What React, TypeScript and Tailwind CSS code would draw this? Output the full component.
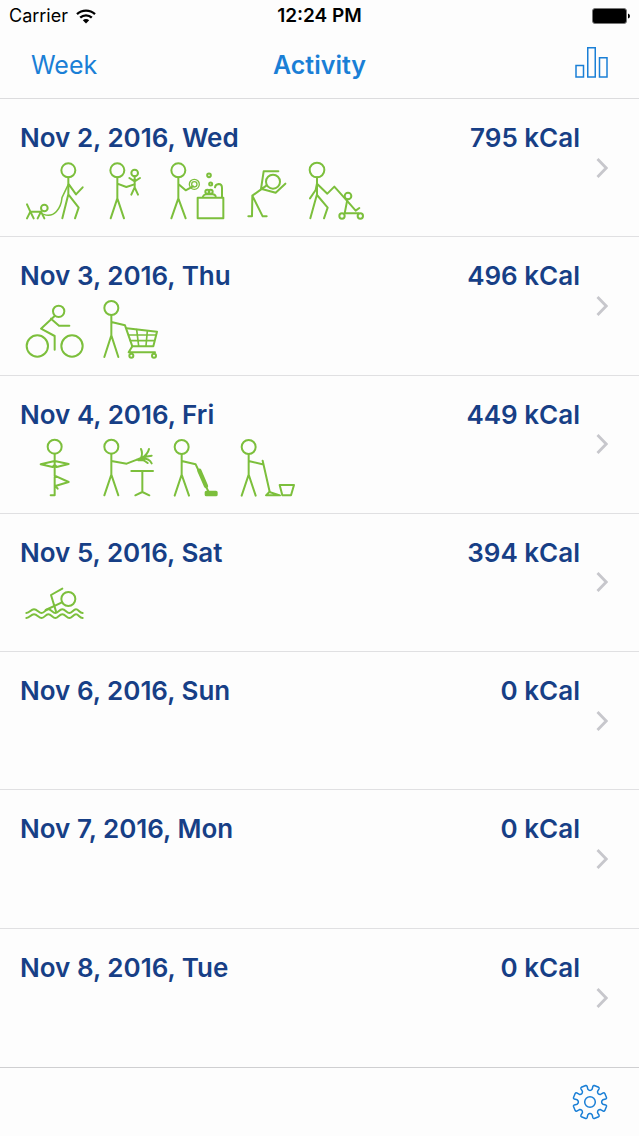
import type { ReactNode } from "react";

function Drawing({
  viewBox,
  width,
  label,
  children,
}: {
  viewBox: string;
  width: number;
  label: string;
  children: ReactNode;
}) {
  return (
    <svg
      viewBox={viewBox}
      width={width}
      height={60}
      role="img"
      aria-label={label}
      className="shrink-0 overflow-visible"
      fill="none"
      stroke="#7cbf3c"
      strokeWidth={6}
      strokeLinecap="round"
      strokeLinejoin="round"
    >
      {children}
    </svg>
  );
}

const WalkingDog = () => (
  <Drawing viewBox="27 18 186 180" width={62} label="Walking the dog">
    <circle cx="160" cy="46" r="21" />
    <path d="M160 67V118L142 190M160 118L191 158L180 190M160 86L183 118L203 97" />
    <path d="M160 88L141 128C138 160 118 190 86 178" strokeWidth={4.5} />
    <circle cx="88" cy="159" r="10" />
    <path d="M36 148L46 170H78M46 170L36 190M46 170L56 190M78 170L68 190M78 170L88 190" />
  </Drawing>
);

const HoldingBaby = () => (
  <Drawing viewBox="273 18 117 180" width={39} label="Child care">
    <circle cx="307" cy="46" r="21" />
    <path d="M307 67V130L287 190M307 130L327 190M307 86L334 96L358 88" />
    <circle cx="359" cy="54" r="10" />
    <path d="M359 64V97L349 119M359 97L369 119M343 69L359 79L375 69" />
  </Drawing>
);

const WashingDishes = () => (
  <Drawing viewBox="60 18 186 180" width={62} label="Washing dishes">
    <circle cx="100" cy="46" r="21" />
    <path d="M100 67V130L79 190M100 130L122 190M100 87L122 106L144 94" />
    <circle cx="148" cy="88" r="15" strokeWidth={4} />
    <circle cx="148" cy="88" r="8" strokeWidth={4} />
    <path d="M158 128H235V190H158ZM231 126V99Q231 87 221 87Q211 88 210 97" />
    <circle cx="192" cy="61" r="5.5" />
    <circle cx="197" cy="87" r="4.5" />
    <circle cx="187" cy="110" r="6" />
    <circle cx="197" cy="110" r="6" />
    <path d="M174 124Q177 118 185 118H203Q211 119 212 124" />
  </Drawing>
);

const Stretching = () => (
  <Drawing viewBox="36 18 120 180" width={40} label="Stretching">
    <circle cx="114" cy="80" r="21" />
    <path d="M130 49H86L78 102M94 92L52 122L51 184H40M52 122L83 184H95M78 101L122 113L151 86" />
  </Drawing>
);

const PushingStroller = () => (
  <Drawing viewBox="216 18 180 180" width={60} label="Pushing a stroller">
    <circle cx="246" cy="45" r="22" />
    <path d="M246 67V118L226 190M246 120L278 158L267 190M246 85L242 105L225 130M246 86L277 116L298 95L343 145L362 167L373 159" />
    <circle cx="339" cy="123" r="10" />
    <path d="M337 134L329 175H370" />
    <circle cx="321" cy="183" r="8" />
    <circle cx="376" cy="183" r="8" />
  </Drawing>
);

const Cycling = () => (
  <Drawing viewBox="27 13 180 180" width={60} label="Cycling">
    <circle cx="131" cy="50" r="17" />
    <path d="M119 64L78 102L119 124V165M108 72L132 93H163" />
    <circle cx="67" cy="154" r="32" />
    <circle cx="171" cy="154" r="32" />
  </Drawing>
);

const Shopping = () => (
  <Drawing viewBox="267 13 168 180" width={56} label="Shopping">
    <circle cx="289" cy="40" r="21" />
    <path d="M289 61V122L268 187M289 122L310 187M289 82L330 92L352 155" />
    <path d="M335 101L426 111L415 155H352L341 173H420" />
    <path d="M341 121H422M346 138H418M365 105L371 154M397 109L393 154" strokeWidth={5} />
    <circle cx="349" cy="183" r="6" />
    <circle cx="417" cy="183" r="6" />
  </Drawing>
);

const Yoga = () => (
  <Drawing viewBox="-3 24 180 180" width={60} label="Yoga">
    <circle cx="89" cy="50" r="21" />
    <path d="M89 71V196H77M89 93L47 103L83 111L89 104L95 111L131 102L89 93M89 137L131 156L91 168L98 176" />
  </Drawing>
);

const Gardening = () => (
  <Drawing viewBox="237 24 147 180" width={49} label="Watering plants">
    <circle cx="259" cy="50" r="21" />
    <path d="M259 71V134L238 196M259 134L280 196M259 93L305 101L336 89" />
    <path d="M319 123H384M352 123V186L331 196M352 186L373 196" />
    <path d="M336 89L348 84Q354 70 348 57M350 84Q368 74 372 57M350 84Q366 78 380 77M348 86Q372 84 380 100M348 88Q360 92 368 99M340 91H358" />
  </Drawing>
);

const Vacuuming = () => (
  <Drawing viewBox="39 24 141 180" width={47} label="Vacuuming">
    <circle cx="65" cy="51" r="21" />
    <path d="M65 72V134L44 197M65 134L87 197M65 93L107 103L115 120M138 170L146 186" />
    <path d="M118 122L138 168" strokeWidth={13} />
    <rect x="137" y="185" width="33" height="11" rx="2" fill="#7cbf3c" />
  </Drawing>
);

const Mopping = () => (
  <Drawing viewBox="240 24 168 180" width={56} label="Mopping">
    <circle cx="266" cy="51" r="21" />
    <path d="M266 72V134L245 197M266 134L287 197M266 93L307 103M308 92L329 185" />
    <path d="M318 196L328 186L360 196ZM359 165H402L393 196H367Z" />
  </Drawing>
);

const Swimming = () => (
  <Drawing viewBox="42 139 180 180" width={60} label="Swimming">
    <circle cx="175" cy="208" r="21" />
    <path d="M157 177L123 196L138 245M156 218L107 241" />
    <path d="M49 250C60 250 62 239 72 239S86 250 95 250S106 239 115 239S128 250 136 250S148 239 157 239S170 250 178 250S190 239 198 239S208 250 218 250" />
    <path d="M49 265C60 265 62 254 72 254S86 265 95 265S106 254 115 254S128 265 136 265S148 254 157 254S170 265 178 265S190 254 198 254S208 265 218 265" />
  </Drawing>
);

function WifiIcon() {
  return (
    <svg viewBox="0 0 20 15" width={20} height={15} fill="none" stroke="#000" strokeWidth={2.3} aria-label="Wi-Fi" role="img">
      <path d="M1 5.2C6 0.4 14 0.4 19 5.2M4.2 8.7C7.4 5.6 12.6 5.6 15.8 8.7" />
      <path d="M6.8 11.2C8.6 9.5 11.4 9.5 13.2 11.2L10 14.4Z" fill="#000" stroke="none" />
    </svg>
  );
}

function BatteryIcon() {
  return (
    <svg viewBox="0 0 38 16" width={38} height={16} aria-label="Battery full" role="img">
      <rect x="0.5" y="0.5" width="34" height="15" rx="2.5" fill="#000" stroke="#777" />
      <path d="M36 5.5Q38 6 38 8T36 10.5Z" fill="#000" />
    </svg>
  );
}

function ChartIcon() {
  return (
    <svg viewBox="0 0 33 36" width={33} height={36} fill="none" stroke="#1a7fd6" strokeWidth={1.5} aria-hidden="true">
      <rect x="1" y="18.5" width="7.5" height="11.5" />
      <rect x="12.75" y="0.75" width="7.5" height="29.25" />
      <rect x="24.5" y="10.75" width="7.5" height="19.25" />
    </svg>
  );
}

const gearPath = (() => {
  const at = (radius: number, degrees: number) => {
    const a = (degrees * Math.PI) / 180;
    return `${(18 + radius * Math.cos(a)).toFixed(2)} ${(18 + radius * Math.sin(a)).toFixed(2)}`;
  };
  let d = "";
  for (let i = 0; i < 8; i++) {
    const c = 22.5 + i * 45;
    d += `${i ? "L" : "M"}${at(13, c - 13)}L${at(16, c - 12)}Q${at(17.1, c - 11)} ${at(17.1, c - 8)}L${at(17.1, c + 8)}Q${at(17.1, c + 11)} ${at(16, c + 12)}L${at(13, c + 13)}Q${at(10.4, c + 22.5)} ${at(13, c + 32)}`;
  }
  return d + "Z";
})();

function GearIcon() {
  return (
    <svg viewBox="0 0 36 36" width={36} height={36} fill="none" stroke="#1a7fd6" strokeWidth={1.5} strokeLinejoin="round" aria-hidden="true">
      <path d={gearPath} />
      <circle cx="18" cy="18" r="5.3" />
    </svg>
  );
}

type Day = { date: string; energy: string; activities: (() => ReactNode)[] };

const days: Day[] = [
  { date: "Nov 2, 2016, Wed", energy: "795 kCal", activities: [WalkingDog, HoldingBaby, WashingDishes, Stretching, PushingStroller] },
  { date: "Nov 3, 2016, Thu", energy: "496 kCal", activities: [Cycling, Shopping] },
  { date: "Nov 4, 2016, Fri", energy: "449 kCal", activities: [Yoga, Gardening, Vacuuming, Mopping] },
  { date: "Nov 5, 2016, Sat", energy: "394 kCal", activities: [Swimming] },
  { date: "Nov 6, 2016, Sun", energy: "0 kCal", activities: [] },
  { date: "Nov 7, 2016, Mon", energy: "0 kCal", activities: [] },
  { date: "Nov 8, 2016, Tue", energy: "0 kCal", activities: [] },
];

function DayRow({ date, energy, activities }: Day) {
  return (
    <li className="flex border-b border-[#e0e0e2] last:border-b-0">
      <a href="#day" className="flex flex-1 items-center gap-4 pr-[31px] pl-5">
        <div className="flex flex-1 flex-col gap-[7px] self-stretch pt-[23px] pb-3">
          <div className="flex justify-between text-[26px] leading-8 font-semibold text-[#173f86]">
            <span>{date}</span>
            <span>{energy}</span>
          </div>
          <div className="flex gap-5 pl-1">
            {activities.map((Activity, i) => (
              <Activity key={i} />
            ))}
          </div>
        </div>
        <svg viewBox="0 0 12 22" width={12} height={22} fill="none" stroke="#c7c7cc" strokeWidth={2.8} className="shrink-0" aria-hidden="true">
          <path d="M1.5 2L10.2 11L1.5 20" />
        </svg>
      </a>
    </li>
  );
}

export default function App() {
  return (
    <div className="flex min-h-screen flex-col bg-[#fdfdfd] font-['Inter','Liberation_Sans',sans-serif]">
      <header className="border-b border-[#dcdcde]">
        <div className="grid h-8 grid-cols-3 items-center px-[9px] text-lg leading-6 text-black">
          <div className="flex items-center gap-2">
            <span>Carrier</span>
            <WifiIcon />
          </div>
          <span className="text-center text-[19px] font-semibold">12:24 PM</span>
          <div className="flex justify-end">
            <BatteryIcon />
          </div>
        </div>
        <nav className="grid h-[66px] grid-cols-3 items-center px-[31px] text-[25px] leading-8 text-[#1a7fd6]">
          <button type="button" className="justify-self-start">Week</button>
          <h1 className="text-center font-semibold">Activity</h1>
          <button type="button" aria-label="Statistics" className="justify-self-end">
            <ChartIcon />
          </button>
        </nav>
      </header>
      <ul className="grid flex-1 auto-rows-fr">
        {days.map((day) => (
          <DayRow key={day.date} {...day} />
        ))}
      </ul>
      <footer className="flex h-[69px] items-center justify-end border-t border-[#cfcfd1] px-[31px]">
        <button type="button" aria-label="Settings">
          <GearIcon />
        </button>
      </footer>
    </div>
  );
}
